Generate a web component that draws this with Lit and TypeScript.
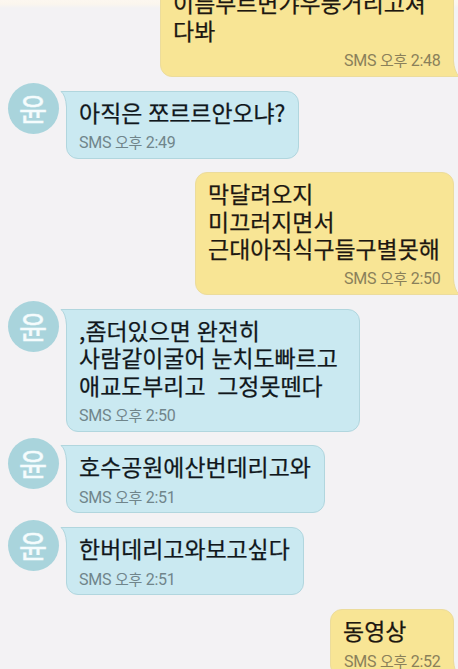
import { LitElement, html, css, svg } from "lit";
import { customElement, property } from "lit/decorators.js";

interface Message {
  out: boolean;
  width: number;
  lines: string[];
  time: string;
}

const MESSAGES: Message[] = [
  { out: true, width: 294, lines: ["이름부르면갸우풍거리고쳐", "다봐"], time: "오후 2:48" },
  { out: false, width: 233, lines: ["아직은 쪼르르안오냐?"], time: "오후 2:49" },
  { out: true, width: 259, lines: ["막달려오지", "미끄러지면서", "근대아직식구들구별못해"], time: "오후 2:50" },
  { out: false, width: 294, lines: [",좀더있으면 완전히", "사람같이굴어 눈치도빠르고", "애교도부리고  그정못뗀다"], time: "오후 2:50" },
  { out: false, width: 259, lines: ["호수공원에산번데리고와"], time: "오후 2:51" },
  { out: false, width: 238, lines: ["한버데리고와보고싶다"], time: "오후 2:51" },
  { out: true, width: 124, lines: ["동영상"], time: "오후 2:52" },
];

@customElement("sms-message")
class SmsMessage extends LitElement {
  @property({ attribute: false }) message!: Message;

  static styles = css`
    :host { display: block; }
    .row { display: flex; align-items: flex-start; padding-left: 7.5px; }
    .row.out { justify-content: flex-end; padding: 0 4.5px 0 0; }
    .avatar {
      width: 51px; height: 51px; margin: -7.5px 7px -60px 0; flex: none;
      border-radius: 50%; background: #a9d4dc; color: #f5fcfd;
      display: flex; align-items: center; justify-content: center;
      font: 400 31px/49px "Noto Sans CJK KR", sans-serif;
      -webkit-text-stroke: 0.4px currentColor;
    }
    .avatar span { margin-top: -2px; }
    .bubble {
      position: relative; box-sizing: border-box; flex: none;
      border: 1px solid #b1d6de; background: #cae9f1;
      border-radius: 0 12px 12px 12px; padding: 7px 13px 5.7px 12.6px;
      color: #10171c;
    }
    .out .bubble {
      border-color: #ecdc9c; background: #f8e595;
      border-radius: 12px 12px 0 12px; color: #1d1710;
    }
    .line {
      font: 400 22.9px/27.3px "Noto Sans CJK KR", sans-serif;
      white-space: pre; word-spacing: 0.8px; -webkit-text-stroke: 0.25px currentColor;
    }
    .meta {
      margin: 7.1px 0 -1px; font: 400 16px/20px Roboto, "Noto Sans CJK KR", sans-serif;
      color: #70858b; white-space: pre; letter-spacing: -0.27px;
    }
    .ko { font-size: 15px; }
    .out .meta { text-align: right; color: #8a805a; margin-right: -1px; }
    .tail { position: absolute; width: 7px; height: 16px; left: -7px; top: -1px; overflow: visible; }
    .out .tail { left: auto; right: -7px; top: auto; bottom: -1px; }
    .fill { fill: #cae9f1; }
    .edge { fill: none; stroke: #b1d6de; }
    .out .fill { fill: #f8e595; }
    .out .edge { stroke: #ecdc9c; }
  `;

  render() {
    const { out, width, lines, time } = this.message;
    const [ampm, clock] = time.split(" ");
    const tail = out
      ? svg`<path class="fill" d="M-.5 0V15.5H6Q1.2 10 .5 0Z"/><path class="edge" d="M.5 0Q1.2 10 6 15.5H-.5"/>`
      : svg`<path class="fill" d="M8 16V.5H1Q5.7 4 6.5 16Z"/><path class="edge" d="M8 .5H1Q5.7 4 6.5 16"/>`;
    return html`<div class="row ${out ? "out" : ""}">
      ${out ? null : html`<div class="avatar"><span>윤</span></div>`}
      <div class="bubble" style="width:${width}px">
        <svg class="tail" viewBox="0 0 7 16">${tail}</svg>
        ${lines.map((l) => html`<div class="line">${l}</div>`)}
        <div class="meta">SMS <span class="ko">${ampm}</span> ${clock}</div>
      </div>
    </div>`;
  }
}

@customElement("app-root")
class AppRoot extends LitElement {
  static styles = css`
    :host { display: block; }
    .screen {
      box-sizing: border-box; height: 669px; overflow: hidden;
      background: linear-gradient(#fcf7f0 0, #fbf6ee 4px, #f3f2f4 8px);
    }
    .thread { display: flex; flex-direction: column; gap: 13.8px; margin-top: -18.6px; }
  `;

  render() {
    return html`<div class="screen"><div class="thread">
      ${MESSAGES.map((m) => html`<sms-message .message=${m}></sms-message>`)}
    </div></div>`;
  }
}
